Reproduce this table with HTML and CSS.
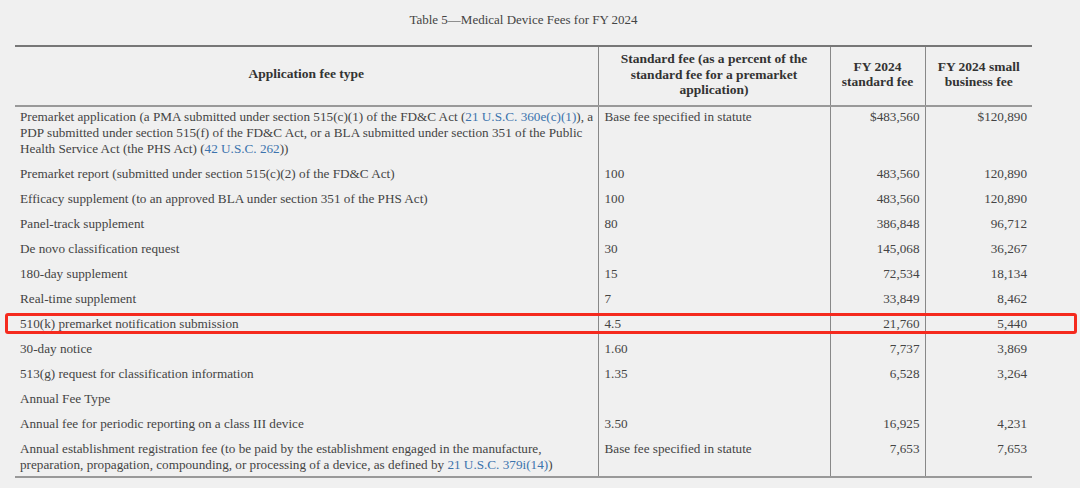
FILE: index.html
```html
<!DOCTYPE html>
<html>
<head>
<meta charset="utf-8">
<link rel="stylesheet" href="styles.css">
</head>
<body>
<div class="page">
  <div class="caption">Table 5—Medical Device Fees for FY 2024</div>
  <table class="fees">
    <colgroup>
      <col class="c1"><col class="c2"><col class="c3"><col class="c4">
    </colgroup>
    <thead>
      <tr>
        <th>Application fee type</th>
        <th>Standard fee (as a percent of the standard fee for a premarket application)</th>
        <th>FY 2024 standard fee</th>
        <th>FY 2024 small business fee</th>
      </tr>
    </thead>
    <tbody>
      <tr>
        <td>Premarket application (a PMA submitted under section 515(c)(1) of the FD&amp;C Act (<a href="#">21 U.S.C. 360e(c)(1)</a>), a PDP submitted under section 515(f) of the FD&amp;C Act, or a BLA submitted under section 351 of the Public Health Service Act (the PHS Act) (<a href="#">42 U.S.C. 262</a>))</td>
        <td>Base fee specified in statute</td>
        <td class="num">$483,560</td>
        <td class="num">$120,890</td>
      </tr>
      <tr><td>Premarket report (submitted under section 515(c)(2) of the FD&amp;C Act)</td><td>100</td><td class="num">483,560</td><td class="num">120,890</td></tr>
      <tr><td>Efficacy supplement (to an approved BLA under section 351 of the PHS Act)</td><td>100</td><td class="num">483,560</td><td class="num">120,890</td></tr>
      <tr><td>Panel-track supplement</td><td>80</td><td class="num">386,848</td><td class="num">96,712</td></tr>
      <tr><td>De novo classification request</td><td>30</td><td class="num">145,068</td><td class="num">36,267</td></tr>
      <tr><td>180-day supplement</td><td>15</td><td class="num">72,534</td><td class="num">18,134</td></tr>
      <tr><td>Real-time supplement</td><td>7</td><td class="num">33,849</td><td class="num">8,462</td></tr>
      <tr><td>510(k) premarket notification submission</td><td>4.5</td><td class="num">21,760</td><td class="num">5,440</td></tr>
      <tr><td>30-day notice</td><td>1.60</td><td class="num">7,737</td><td class="num">3,869</td></tr>
      <tr><td>513(g) request for classification information</td><td>1.35</td><td class="num">6,528</td><td class="num">3,264</td></tr>
      <tr><td>Annual Fee Type</td><td></td><td class="num"></td><td class="num"></td></tr>
      <tr><td>Annual fee for periodic reporting on a class III device</td><td>3.50</td><td class="num">16,925</td><td class="num">4,231</td></tr>
      <tr><td>Annual establishment registration fee (to be paid by the establishment engaged in the manufacture, preparation, propagation, compounding, or processing of a device, as defined by <a href="#">21 U.S.C. 379i(14)</a>)</td><td>Base fee specified in statute</td><td class="num">7,653</td><td class="num">7,653</td></tr>
    </tbody>
  </table>
  <div class="highlight"></div>
</div>
</body>
</html>
```

FILE: styles.css
```css
html, body {
  margin: 0;
  padding: 0;
  background: #f0f0f0;
}
body {
  width: 1080px;
  height: 488px;
  overflow: hidden;
  font-family: "Liberation Serif", "Times New Roman", serif;
  color: #444;
}
.page {
  position: relative;
  padding: 12px 0 0 15px;
}
.caption {
  width: 1017px;
  text-align: center;
  font-size: 13px;
  line-height: 16px;
  color: #444;
  margin-bottom: 17px;
}
.fees {
  width: 1017px;
  border-collapse: collapse;
  table-layout: fixed;
  font-size: 13.2px;
  line-height: 16px;
}
.c1 { width: 583px; }
.c2 { width: 232px; }
.c3 { width: 95px; }
.c4 { width: 107px; }
.fees thead tr {
  border-top: 2px solid #777;
  border-bottom: 2px solid #999;
}
.fees tbody tr:last-child {
  border-bottom: 2px solid #999;
}
.fees th {
  font-weight: bold;
  font-size: 13.5px;
  color: #333;
  text-align: center;
  vertical-align: middle;
  padding: 4px 4px 7px;
  line-height: 15.5px;
}
.fees th:first-child {
  padding-top: 2px;
}
.fees th + th, .fees td + td {
  border-left: 1px solid #888;
}
.fees td {
  vertical-align: top;
  padding: 3px 2px 6px 5px;
  text-align: left;
}
.fees tbody tr:first-child td {
  padding-top: 2px;
}
.fees tbody tr:last-child td {
  padding-bottom: 3px;
}
.fees td + td {
  padding-left: 6px;
}
.fees td.num {
  text-align: right;
  padding-right: 5px;
}
.fees a {
  color: #3b73ad;
  text-decoration: none;
}
.highlight {
  position: absolute;
  left: 5px;
  top: 313px;
  width: 1066px;
  height: 15px;
  border: 3px solid #f52a1e;
  border-radius: 3px;
}
```
